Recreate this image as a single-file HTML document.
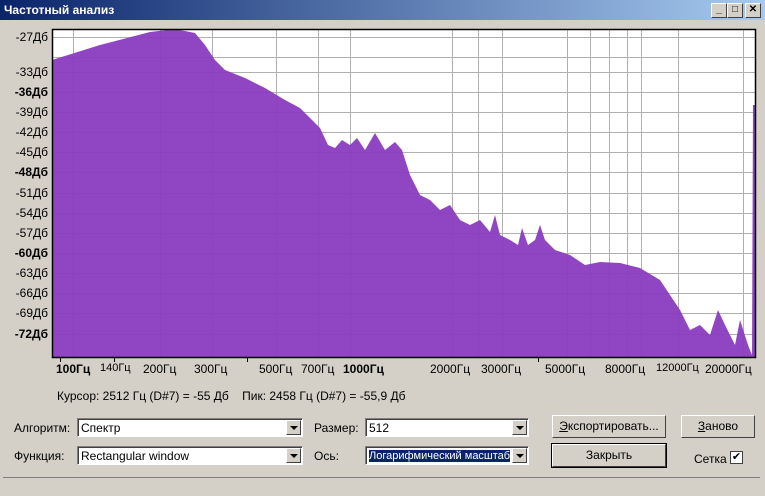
<!DOCTYPE html>
<html><head><meta charset="utf-8"><style>
body{margin:0;width:765px;height:496px;overflow:hidden;background:#d4d0c8;font-family:"Liberation Sans",sans-serif;font-size:11px;position:relative}
.t{position:absolute;left:0;top:0;width:765px;height:20px;background:linear-gradient(90deg,#0a246a,#a6caf0);color:#fff;font-weight:bold;font-size:12px;line-height:20px;text-indent:4px}
.wb{position:absolute;top:3px;width:14px;height:13px;background:#d4d0c8;border:1px solid;border-color:#fff #404040 #404040 #fff;font-size:10px;line-height:12px;text-align:center;color:#000;font-weight:bold}
.a{position:absolute;white-space:nowrap}
.yl{position:absolute;right:717px;font-size:12px;line-height:12px}
.xl{position:absolute;top:362px;font-size:12px}
.cb{position:absolute;height:19px;background:#fff;border:1px solid;border-color:#808080 #fff #fff #808080;box-shadow:inset 1px 1px #404040;font-size:12px;line-height:19px;padding-left:3px;box-sizing:border-box;overflow:hidden;white-space:nowrap}
.dd{position:absolute;right:1px;top:1px;width:15px;height:15px;background:#d4d0c8;border:1px solid;border-color:#fff #404040 #404040 #fff;box-sizing:border-box}
.dd:after{content:"";position:absolute;left:3px;top:5px;border:4px solid transparent;border-top:4px solid #000;border-bottom:0}
.bt{position:absolute;height:23px;background:#d4d0c8;border:1px solid;border-color:#fff #404040 #404040 #fff;box-sizing:border-box;text-align:center;line-height:21px;font-size:12px}
</style></head><body>
<div class="t">Частотный анализ</div>
<div class="wb" style="left:711px">_</div><div class="wb" style="left:727px">□</div><div class="wb" style="left:745px">✕</div>
<svg class="a" style="left:0;top:0" width="765" height="400">
<rect x="52" y="29" width="703" height="328" fill="#fff"/>
<g stroke="#b0b0b0" stroke-width="1">
<line x1="52" x2="755" y1="37.5" y2="37.5"/><line x1="52" x2="755" y1="57.5" y2="57.5"/><line x1="52" x2="755" y1="72.5" y2="72.5"/><line x1="52" x2="755" y1="92.5" y2="92.5"/><line x1="52" x2="755" y1="112.5" y2="112.5"/><line x1="52" x2="755" y1="132.5" y2="132.5"/><line x1="52" x2="755" y1="152.5" y2="152.5"/><line x1="52" x2="755" y1="172.5" y2="172.5"/><line x1="52" x2="755" y1="193.5" y2="193.5"/><line x1="52" x2="755" y1="213.5" y2="213.5"/><line x1="52" x2="755" y1="233.5" y2="233.5"/><line x1="52" x2="755" y1="253.5" y2="253.5"/><line x1="52" x2="755" y1="273.5" y2="273.5"/><line x1="52" x2="755" y1="293.5" y2="293.5"/><line x1="52" x2="755" y1="313.5" y2="313.5"/><line x1="52" x2="755" y1="334.5" y2="334.5"/>
<line y1="29" y2="357" x1="73.5" x2="73.5"/><line y1="29" y2="357" x1="160.5" x2="160.5"/><line y1="29" y2="357" x1="212.5" x2="212.5"/><line y1="29" y2="357" x1="276.5" x2="276.5"/><line y1="29" y2="357" x1="318.5" x2="318.5"/><line y1="29" y2="357" x1="350.5" x2="350.5"/><line y1="29" y2="357" x1="452.5" x2="452.5"/><line y1="29" y2="357" x1="478.5" x2="478.5"/><line y1="29" y2="357" x1="502.5" x2="502.5"/><line y1="29" y2="357" x1="567.5" x2="567.5"/><line y1="29" y2="357" x1="590.5" x2="590.5"/><line y1="29" y2="357" x1="609.5" x2="609.5"/><line y1="29" y2="357" x1="627.5" x2="627.5"/><line y1="29" y2="357" x1="641.5" x2="641.5"/><line y1="29" y2="357" x1="678.5" x2="678.5"/><line y1="29" y2="357" x1="743.5" x2="743.5"/>
</g>
<polygon fill="#8a3cc0" fill-opacity="0.95" points="52,60 100,45 150,32 175,29 195,33 205,45 215,60 225,70 245,78 265,88 285,100 300,108 310,118 320,128 328,145 335,148 342,140 350,145 357,138 365,150 375,133 385,150 395,142 402,150 410,175 420,195 430,200 440,210 450,205 460,220 470,225 480,220 490,232 495,215 500,235 510,240 518,245 522,228 528,245 535,240 540,225 545,240 555,250 570,255 585,265 600,262 620,263 640,268 660,280 680,310 690,330 700,325 710,335 718,310 725,325 735,345 740,320 748,345 752,355 753,105 755,105 755,357 52,357"/>
<rect x="52.5" y="29.5" width="703" height="328" fill="none" stroke="#000" stroke-width="1.5"/>
<g stroke="#000"><line x1="60.5" x2="60.5" y1="357" y2="362"/><line x1="114.5" x2="114.5" y1="357" y2="362"/><line x1="247.5" x2="247.5" y1="357" y2="362"/><line x1="538.5" x2="538.5" y1="357" y2="362"/></g>
</svg>
<div class="yl" style="top:31px">-27Дб</div><div class="yl" style="top:66px">-33Дб</div><div class="yl" style="top:86px;font-weight:bold">-36Дб</div><div class="yl" style="top:106px">-39Дб</div><div class="yl" style="top:126px">-42Дб</div><div class="yl" style="top:146px">-45Дб</div><div class="yl" style="top:166px;font-weight:bold">-48Дб</div><div class="yl" style="top:187px">-51Дб</div><div class="yl" style="top:207px">-54Дб</div><div class="yl" style="top:227px">-57Дб</div><div class="yl" style="top:247px;font-weight:bold">-60Дб</div><div class="yl" style="top:267px">-63Дб</div><div class="yl" style="top:287px">-66Дб</div><div class="yl" style="top:307px">-69Дб</div><div class="yl" style="top:328px;font-weight:bold">-72Дб</div>
<div class="xl" style="left:56px;font-weight:bold">100Гц</div><div class="xl" style="left:100px;font-size:11px">140Гц</div><div class="xl" style="left:143px">200Гц</div><div class="xl" style="left:194px">300Гц</div><div class="xl" style="left:259px">500Гц</div><div class="xl" style="left:301px">700Гц</div><div class="xl" style="left:343px;font-weight:bold">1000Гц</div><div class="xl" style="left:430px">2000Гц</div><div class="xl" style="left:481px">3000Гц</div><div class="xl" style="left:545px">5000Гц</div><div class="xl" style="left:605px">8000Гц</div><div class="xl" style="left:656px;font-size:11px">12000Гц</div><div class="xl" style="left:705px">20000Гц</div>
<div class="a" style="left:57px;top:389px;font-size:12px">Курсор: 2512 Гц (D#7) = -55 Дб&nbsp;&nbsp;&nbsp; Пик: 2458 Гц (D#7) = -55,9 Дб</div>
<div class="a" style="left:14px;top:421px;font-size:12px">Алгоритм:</div>
<div class="a" style="left:14px;top:449px;font-size:12px">Функция:</div>
<div class="a" style="left:314px;top:421px;font-size:12px">Размер:</div>
<div class="a" style="left:314px;top:449px;font-size:12px">Ось:</div>
<div class="cb" style="left:77px;top:418px;width:226px">Спектр<div class="dd"></div></div>
<div class="cb" style="left:77px;top:446px;width:226px">Rectangular window<div class="dd"></div></div>
<div class="cb" style="left:365px;top:418px;width:164px">512<div class="dd"></div></div>
<div class="cb" style="left:365px;top:446px;width:164px;font-size:11px"><span style="background:#0a246a;color:#fff">Логарифмический масштаб</span><div class="dd"></div></div>
<div class="bt" style="left:552px;top:415px;width:114px"><u>Э</u>кспортировать...</div>
<div class="bt" style="left:681px;top:415px;width:74px"><u>З</u>аново</div>
<div class="bt" style="left:552px;top:444px;width:114px;outline:1px solid #000">Закрыть</div>
<div class="a" style="left:694px;top:452px;font-size:12px">Сетка</div>
<div class="a" style="left:730px;top:451px;width:11px;height:11px;background:#fff;border:1px solid #404040;font-size:11px;line-height:11px;text-align:center">✔</div>
<div class="a" style="left:3px;top:477px;width:757px;height:15px;border-top:1px solid #808080"></div>
</body></html>
